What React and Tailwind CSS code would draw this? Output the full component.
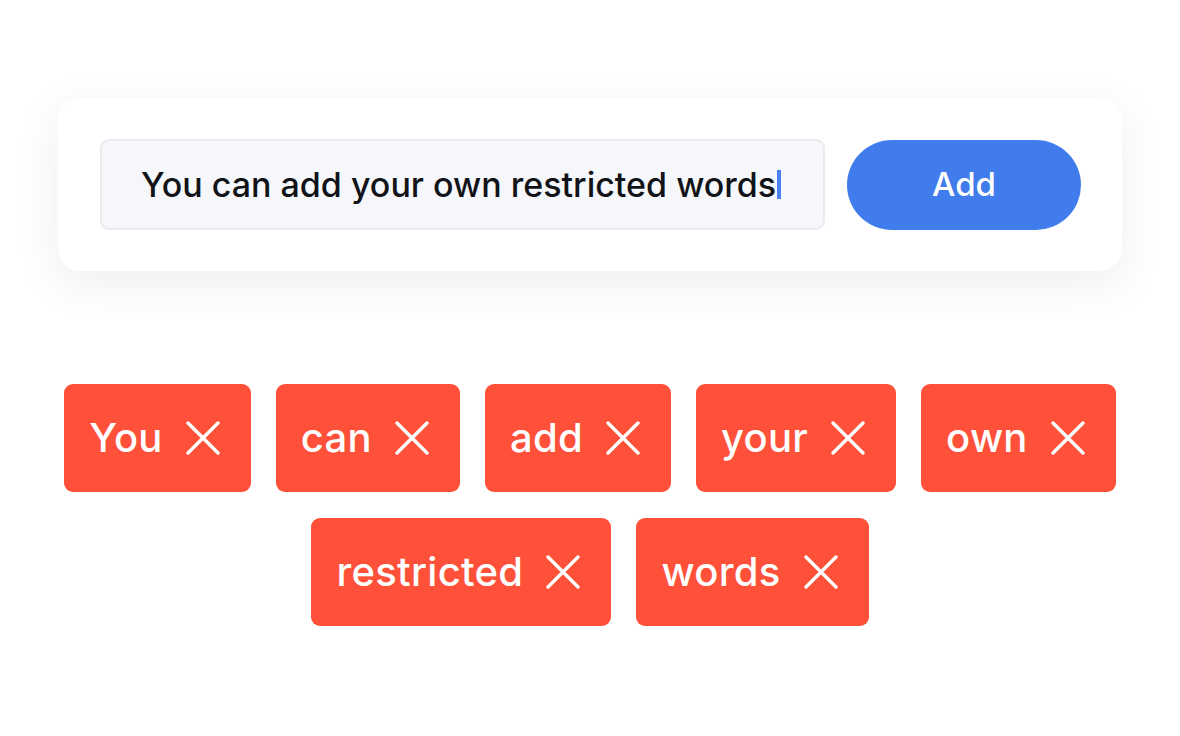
const words = ['You', 'can', 'add', 'your', 'own', 'restricted', 'words'];

const Cross = () => (
    <svg width="34" height="34" viewBox="0 0 34 34" fill="none" stroke="currentColor" strokeWidth="3.4" strokeLinecap="round">
        <path d="M2 2L32 32M32 2L2 32" />
    </svg>
);

const Tag = ({ word }) => (
    <div className="h-[108px] flex items-center gap-[23px] pl-[25px] pr-[31px] rounded-[9px] bg-[#ff5139] text-white">
        <span className="text-[40px] leading-none font-medium tracking-[0.3px]">{word}</span>
        <Cross />
    </div>
);

const App = () => {
    return (
        <div
            className="w-[1180px] h-[736px] bg-white pt-[98px] px-[58px]"
            style={{ fontFamily: 'Inter, "Noto Sans", sans-serif' }}
        >
            <div className="h-[173px] rounded-[22px] bg-white shadow-[0_12px_48px_rgba(0,0,0,0.07)] flex items-center gap-[22px] pl-[42px] pr-[41px]">
                <div className="h-[91px] w-[725px] flex items-center pl-[39px] rounded-[9px] bg-[#f5f7fa] border-2 border-[#e9ebee] text-[#111318] text-[34px] font-medium">
                    You can add your own restricted words
                    <span className="ml-[1px] inline-block w-[4px] h-[29px] bg-[#4a7fee]" />
                </div>
                <button className="h-[90px] flex-1 rounded-full bg-[#417cec] text-white text-[33px] font-medium">
                    Add
                </button>
            </div>

            <div className="mt-[113px] flex flex-wrap justify-center gap-x-[25px] gap-y-[26px]">
                {words.map((w) => (
                    <Tag key={w} word={w} />
                ))}
            </div>
        </div>
    );
};

export default App;
